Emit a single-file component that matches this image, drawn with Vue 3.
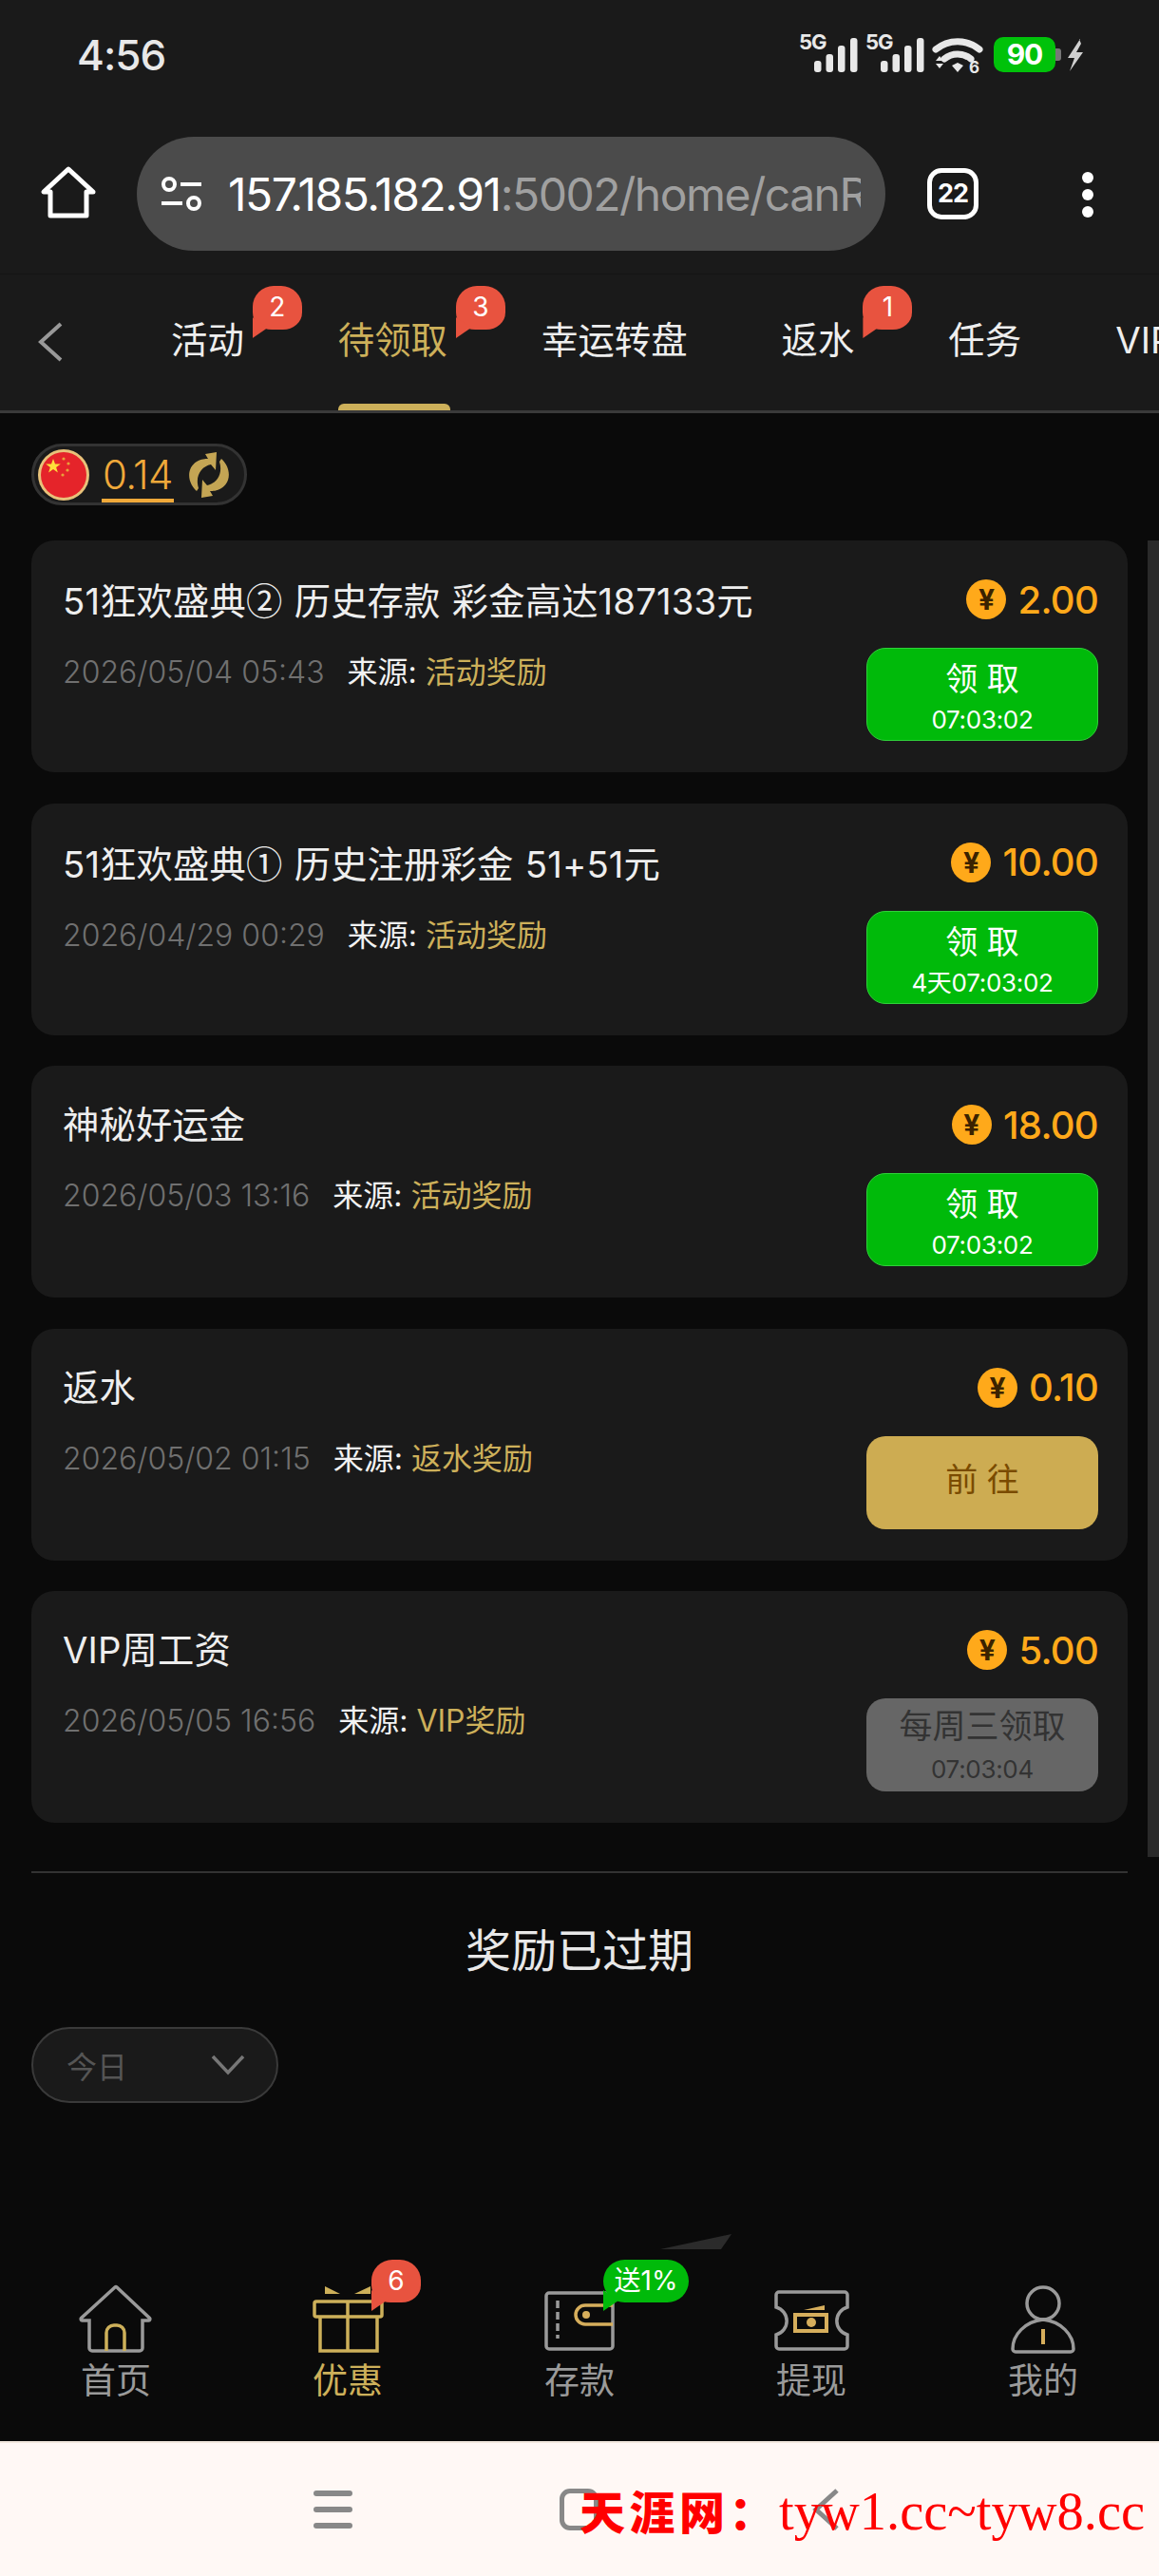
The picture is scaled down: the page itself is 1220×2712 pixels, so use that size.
<script setup>
const tabs = [
  { label: '活动', badge: 2 },
  { label: '待领取', badge: 3, active: true },
  { label: '幸运转盘' },
  { label: '返水', badge: 1 },
  { label: '任务' },
  { label: 'VIP' }
]
const cards = [
  { pre: '51狂欢盛典', mark: '②', title: ' 历史存款 彩金高达187133元', amount: '2.00', date: '2026/05/04 05:43', source: '活动奖励', kind: 'green', main: '领 取', time: '07:03:02' },
  { pre: '51狂欢盛典', mark: '①', title: ' 历史注册彩金 51+51元', amount: '10.00', date: '2026/04/29 00:29', source: '活动奖励', kind: 'green', main: '领 取', time: '4天07:03:02' },
  { title: '神秘好运金', amount: '18.00', date: '2026/05/03 13:16', source: '活动奖励', kind: 'green', main: '领 取', time: '07:03:02' },
  { title: '返水', amount: '0.10', date: '2026/05/02 01:15', source: '返水奖励', kind: 'gold', main: '前 往' },
  { title: 'VIP周工资', amount: '5.00', date: '2026/05/05 16:56', source: 'VIP奖励', kind: 'gray', main: '每周三领取', time: '07:03:04' }
]
</script>

<template>
  <div class="page">
    <header class="top">
      <div class="status">
        <span class="clock">4:56</span>
        <svg class="status-icons" width="330" height="70" viewBox="0 0 330 70">
          <g fill="#e8e8e8">
            <text x="0" y="32" class="s5g">5G</text>
            <rect x="16" y="44" width="7.500" height="12" rx="3"/><rect x="28.500" y="37" width="7.500" height="19" rx="3"/><rect x="41" y="28" width="7.500" height="28" rx="3"/><rect x="54" y="20" width="7.500" height="36" rx="3"/>
            <text x="70" y="32" class="s5g">5G</text>
            <rect x="86" y="44" width="7.500" height="12" rx="3"/><rect x="98.500" y="37" width="7.500" height="19" rx="3"/><rect x="111" y="28" width="7.500" height="28" rx="3"/><rect x="124" y="20" width="7.500" height="36" rx="3"/>
            <path d="M144 32 a36 36 0 0 1 46 0" fill="none" stroke="#e8e8e8" stroke-width="7" stroke-linecap="round"/>
            <path d="M153 42 a22 22 0 0 1 28 0" fill="none" stroke="#e8e8e8" stroke-width="7" stroke-linecap="round"/>
            <path d="M161 49l6-3 6 3-6 7z"/>
            <path d="M148 39l-4 5h8zM144 47h8l-4 5z"/>
            <text x="179" y="57" class="s6">6</text>
          </g>
          <rect x="205" y="19" width="65" height="37" rx="10" fill="#00c20a"/>
          <path d="M270 31h3a3 3 0 0 1 3 3v7a3 3 0 0 1-3 3h-3z" fill="#777"/>
          <text x="237.500" y="48" text-anchor="middle" class="batt">90</text>
          <path d="M296 21l-13 20h7l-5 14 14-20h-7l5-9-2-5z" fill="#d0d0d0"/>
        </svg>
      </div>

      <div class="address">
        <svg class="home" width="60" height="60" viewBox="0 0 60 60"><path d="M11 29v25h38V29h7L30 5 4 29z" transform="translate(0 -1)" fill="none" stroke="#fff" stroke-width="5" stroke-linejoin="round"/></svg>
        <div class="url">
          <svg width="46" height="40" viewBox="0 0 46 40" fill="none" stroke="#fff" stroke-width="4"><circle cx="10" cy="10" r="6"/><path d="M22 10h22M2 30h22"/><circle cx="36" cy="30" r="6"/></svg>
          <div class="url-text"><span class="url-host">157.185.182.91</span><span class="url-rest">:5002/home/canReceive</span></div>
        </div>
        <div class="count">22</div>
        <div class="dots"><i></i><i></i><i></i></div>
      </div>

      <nav class="tabs">
        <svg class="back" width="28" height="42" viewBox="0 0 28 42"><path d="M25 2L4 21l21 19" fill="none" stroke="#999" stroke-width="4"/></svg>
        <div class="tab-row">
          <div v-for="t in tabs" :key="t.label" class="tab" :class="{ active: t.active }">
            {{ t.label }}
            <span v-if="t.badge" class="bubble red">{{ t.badge }}</span>
          </div>
        </div>
      </nav>
    </header>

    <main class="content">
      <div class="balance">
        <svg width="56" height="56" viewBox="0 0 56 56">
          <circle cx="28" cy="28" r="27" fill="#e8c27a"/>
          <circle cx="28" cy="28" r="24" fill="#e5242a"/>
          <path d="M17 11l2 5.500h5.800l-4.700 3.400 1.800 5.600-4.900-3.400-4.900 3.400 1.800-5.600-4.700-3.400h5.800z" fill="#ffdf3a"/>
          <g fill="#e9a13a"><circle cx="28" cy="11" r="1.600"/><circle cx="33" cy="16" r="1.600"/><circle cx="32" cy="23" r="1.600"/><circle cx="27" cy="28" r="1.600"/></g>
        </svg>
        <span class="bal-num">0.14</span>
        <svg class="refresh" width="48" height="50" viewBox="0 0 48 50">
          <path d="M32 1l-1 19-5-6C16 16 9 26 13 39l-2 3C1 33 0 18 11 11c5-3 9-3 12-3l-3-5z" fill="#c4a554"/>
          <path d="M16 49l1-19 5 6c10-2 17-12 13-25l2-3c10 9 11 24 0 31-5 3-9 3-12 3l3 5z" fill="#c4a554"/>
        </svg>
      </div>

      <section class="list">
        <article v-for="c in cards" :key="c.date" class="card">
          <div class="card-left">
            <h3 class="card-title"><template v-if="c.mark">{{ c.pre }}<span class="cjk">{{ c.mark }}</span></template>{{ c.title }}</h3>
            <div class="meta">
              <span class="date">{{ c.date }}</span>
              <span class="src">来源: <b>{{ c.source }}</b></span>
            </div>
          </div>
          <div class="card-right">
            <div class="amount"><span class="coin">¥</span>{{ c.amount }}</div>
            <button class="act" :class="c.kind">
              <span class="act-main">{{ c.main }}</span>
              <span v-if="c.time" class="act-time">{{ c.time }}</span>
            </button>
          </div>
        </article>
      </section>

      <div class="rule"></div>
      <h2 class="expired">奖励已过期</h2>
      <div class="picker">
        <span>今日</span>
        <svg width="36" height="22" viewBox="0 0 36 22"><path d="M2 2l16 17L34 2" fill="none" stroke="#777" stroke-width="3.500"/></svg>
      </div>
    </main>

    <div class="scrollbar"></div>
    <svg class="sliver" width="76" height="17" viewBox="0 0 76 17"><path d="M75 0L64 16H0z" fill="#2b2b2b"/></svg>

    <footer class="nav">
      <div class="nav-item">
        <svg width="120" height="80" viewBox="0 0 120 80" fill="none" stroke-width="3.500">
          <path stroke="#9a9a9a" d="M32 43v29a3 3 0 0 0 3 3h50a3 3 0 0 0 3-3V43h6.500a1.500 1.500 0 0 0 1-2.500L61 8a1.500 1.500 0 0 0-2 0L23.500 40.500a1.500 1.500 0 0 0 1 2.500z"/>
          <path stroke="#cdb05a" d="M50 75V56a8 8 0 0 1 8-8h3a8 8 0 0 1 8 8v19"/>
        </svg>
        <span>首页</span>
      </div>
      <div class="nav-item on">
        <svg width="120" height="80" viewBox="0 0 120 80" fill="none" stroke="#cdb05a" stroke-width="3.500">
          <rect x="25" y="23" width="71" height="16" rx="2"/>
          <path d="M31 39v36h60V39M60 23v52"/>
          <path d="M36 7v8h16zM84 7v8H67z" fill="#cdb05a" stroke="none"/>
        </svg>
        <span>优惠</span>
        <em class="bubble red nav-bubble">6</em>
      </div>
      <div class="nav-item">
        <svg width="120" height="80" viewBox="0 0 120 80" fill="none" stroke-width="3.500">
          <rect x="25" y="14" width="70" height="59" rx="3" stroke="#9a9a9a"/>
          <path d="M37 22v40" stroke="#9a9a9a" stroke-dasharray="8 4"/>
          <path d="M95 27H66a10 10 0 0 0 0 20h29" stroke="#d6ae5c"/>
          <circle cx="67" cy="37" r="4" fill="#d6ae5c"/>
        </svg>
        <span>存款</span>
        <em class="bubble green nav-bubble wide">送1%</em>
      </div>
      <div class="nav-item">
        <svg width="120" height="80" viewBox="0 0 120 80" fill="none" stroke-width="3.500">
          <path stroke="#9a9a9a" d="M26 13h69a3 3 0 0 1 3 3v13a15 15 0 0 0 0 29v12a3 3 0 0 1-3 3H26a3 3 0 0 1-3-3V58a15 15 0 0 0 0-29V16a3 3 0 0 1 3-3z"/>
          <rect x="43" y="37" width="33" height="17" stroke="#d6ae5c" stroke-width="4"/>
          <circle cx="60" cy="45" r="5" fill="#d6ae5c"/>
          <path d="M52 32l22-5v5z" fill="#d6ae5c"/>
        </svg>
        <span>提现</span>
      </div>
      <div class="nav-item">
        <svg width="120" height="80" viewBox="0 0 120 80" fill="none" stroke-width="3.500">
          <ellipse cx="60" cy="25" rx="17" ry="17" stroke="#9a9a9a"/>
          <path stroke="#9a9a9a" d="M31 76h58a3 3 0 0 0 3-3c0-15-13-29-32-31-19 2-32 16-32 31a3 3 0 0 0 3 3z"/>
          <path d="M60 52v16" stroke="#d6ae5c" stroke-width="4"/>
        </svg>
        <span>我的</span>
      </div>
    </footer>

    <div class="sysbar">
      <div class="sys-menu"><i></i><i></i><i></i></div>
      <div class="sys-square"></div>
      <svg width="30" height="44" viewBox="0 0 30 44"><path d="M27 2L5 22l22 20" fill="none" stroke="#888" stroke-width="5"/></svg>
    </div>
    <div class="mark"><b>天涯网：</b><span>tyw1.cc~tyw8.cc</span></div>
  </div>
</template>

<style>
html, body { margin: 0; background: #0a0a0a; }
</style>

<style scoped>
.page {
  position: relative;
  width: 1220px;
  height: 2712px;
  overflow: hidden;
  display: flex;
  flex-direction: column;
  background: #0a0a0a;
  color: #e8e8e8;
  font-family: Inter, "Noto Sans CJK SC", sans-serif;
}
.cjk { font-family: "Noto Sans CJK SC", sans-serif; }
.top { background: #1a1a1a; border-bottom: 3px solid #3a3a3a; }
.status { height: 116px; position: relative; }
.clock { position: absolute; left: 81px; top: 30px; font-size: 44px; line-height: 56px; font-weight: 500; color: #e8e8e8; letter-spacing: -1px; }
.status-icons { position: absolute; left: 841px; top: 20px; }
.s5g { font-size: 22px; font-weight: 700; letter-spacing: -1px; }
.s6 { font-size: 17px; font-weight: 700; }
.batt { font-size: 30px; font-weight: 700; fill: #fff; letter-spacing: -1px; }

.address { height: 172px; box-sizing: border-box; padding-top: 28px; display: flex; align-items: flex-start; position: relative; }
.home { margin: 30px 0 0 42px; }
.url { margin-left: 42px; width: 788px; height: 120px; border-radius: 60px; background: #4b4b4b; display: flex; align-items: center; padding-left: 24px; box-sizing: border-box; }
.url-text { margin-left: 26px; width: 666px; overflow: hidden; white-space: nowrap; font-size: 48px; letter-spacing: -1.5px; }
.url-host { color: #fff; }
.url-rest { color: #a0a0a0; }
.count { margin: 33px 0 0 44px; width: 54px; height: 54px; box-sizing: border-box; border: 5px solid #fff; border-radius: 15px; color: #fff; font-size: 27px; font-weight: 700; line-height: 44px; text-align: center; letter-spacing: -1px; }
.dots { margin: 15px 0 0 109px; display: flex; flex-direction: column; gap: 6px; padding-top: 22px; }
.dots i { width: 12px; height: 12px; border-radius: 50%; background: #fff; }

.tabs { height: 144px; position: relative; border-top: 0; overflow: hidden; box-shadow: inset 0 1px 0 #141414; }
.back { position: absolute; left: 39px; top: 51px; }
.tab-row { display: flex; gap: 99px; padding-left: 180px; height: 100%; white-space: nowrap; }
.tab { position: relative; font-size: 38.4px; line-height: 140px; color: #eee; }
.tab.active { color: #cdb05a; }
.tab.active::after { content: ""; position: absolute; left: 0; right: -3px; bottom: 0; height: 7px; border-radius: 6px 6px 0 0; background: #cdb05a; }
.bubble { position: absolute; display: block; box-sizing: border-box; font-style: normal; text-align: center; color: #fff; }
.bubble::after { content: ""; position: absolute; left: 0; bottom: -9px; width: 16px; height: 22px; background: inherit; clip-path: polygon(0 0, 100% 50%, 0 100%); }
.red { background: #e8533f; }
.green { background: #00ba0a; }
.tab .bubble { left: calc(100% + 9px); top: 13px; width: 52px; height: 46px; border-radius: 22px 22px 20px 20px / 22px 22px 18px 18px; font-size: 28px; line-height: 44px; }

.content { flex: 1; padding: 32px 33px 0; }
.balance { width: 227px; height: 65px; box-sizing: border-box; border: 3px solid #333; border-radius: 33px; background: #1a1a1a; display: flex; align-items: center; padding-left: 3px; }
.bal-num { margin-left: 12px; width: 76px; font-size: 42px; line-height: 50px; height: 54px; color: #f0a93a; border-bottom: 4px solid #f0a93a; box-sizing: border-box; letter-spacing: -0.5px; font-weight: 300; text-align: center; margin-top: 4px; }
.refresh { margin-left: 13px; }

.list { margin-top: 37px; display: flex; flex-direction: column; gap: 32.5px; }
.card { height: 244px; box-sizing: border-box; border-radius: 24px; background: #1a1a1a; padding: 0 31px 0 33px; display: flex; justify-content: space-between; }
.card-left { padding-top: 36px; }
.card-title { margin: 0; font-size: 38.3px; line-height: 52px; font-weight: 400; color: #eee; white-space: pre; letter-spacing: 0.15px; word-spacing: 1.4px; }
.meta { margin-top: 27px; display: flex; gap: 24px; font-size: 32px; line-height: 44px; white-space: nowrap; }
.date { color: #707070; font-weight: 300; }
.src { color: #f2f2f2; }
.src b { font-weight: 400; color: #cdb05a; }
.card-right { padding-top: 41px; display: flex; flex-direction: column; align-items: flex-end; }
.amount { display: flex; align-items: center; height: 42px; font-size: 40px; font-weight: 500; color: #ffa91a; letter-spacing: -0.7px; }
.coin { width: 42px; height: 42px; margin-right: 12px; border-radius: 50%; background: #ffa91a; color: #3a2200; font-size: 30px; font-weight: 700; line-height: 42px; text-align: center; letter-spacing: 0; }
.act { margin-top: 30px; width: 244px; height: 98px; border-radius: 20px; border: 1px solid transparent; padding: 0; display: flex; flex-direction: column; align-items: center; justify-content: center; font-family: inherit; }
.act-main { font-size: 34px; line-height: 46px; }
.act-time { font-size: 26px; line-height: 36px; margin-top: 2px; letter-spacing: -0.3px; }
.act.green { background: #00ba0a; border-color: #2fd03a; color: #fff; padding-top: 6px; }
.act.gold { background: #cdac52; color: #7a4b00; padding-bottom: 6px; }
.act.gray { background: #666; color: #333; }
.act.gray .act-main { font-size: 35px; }
.act.gray .act-time { margin-top: 5px; }

.rule { margin-top: 51px; height: 2px; background: #333; }
.expired { margin: 50px 0 0; text-align: center; font-size: 48px; line-height: 64px; font-weight: 400; color: #e8e8e8; }
.picker { margin-top: 48px; width: 260px; height: 80px; box-sizing: border-box; border: 2px solid #3a3a3a; border-radius: 40px; background: #1a1a1a; display: flex; align-items: center; justify-content: space-between; padding: 0 33px 0 35px; color: #555; font-size: 32px; }

.scrollbar { position: absolute; right: 0; top: 569px; width: 12px; height: 1386px; background: #2a2a2a; }
.sliver { position: absolute; left: 695px; top: 2352px; }

.nav { height: 182px; display: grid; grid-template-columns: repeat(5, 1fr); box-sizing: border-box; padding-top: 12px; background: #0a0a0a; }
.nav-item { position: relative; display: flex; flex-direction: column; align-items: center; color: #9a9a9a; font-size: 37px; line-height: 50px; }
.nav-item svg { display: block; margin-bottom: 2px; }
.nav-item.on { color: #cdb05a; }
.nav-bubble { top: -21px; left: calc(50% + 25px); width: 52px; height: 45px; border-radius: 22px 22px 20px 20px / 22px 22px 18px 18px; font-size: 28px; line-height: 44px; }
.nav-bubble.wide { width: 90px; border-radius: 24px; }

.sysbar { height: 142px; background: #fff8f5; display: flex; align-items: center; box-sizing: border-box; padding-left: 330px; border-top: 2px solid #f2e8de; }
.sys-menu { display: flex; flex-direction: column; gap: 11px; }
.sys-menu i { display: block; width: 41px; height: 6px; border-radius: 3px; background: #888; }
.sys-square { margin-left: 218px; width: 41px; height: 44px; box-sizing: border-box; border: 5px solid #888; border-radius: 11px; }
.sysbar svg { margin-left: 224px; }
.mark { position: absolute; left: 610px; top: 2610px; white-space: nowrap; color: #f00; line-height: 68px; }
.mark b { font-size: 48px; font-weight: 900; letter-spacing: 4.5px; }
.mark span { font-size: 56.5px; font-family: "Liberation Serif", serif; }
</style>
